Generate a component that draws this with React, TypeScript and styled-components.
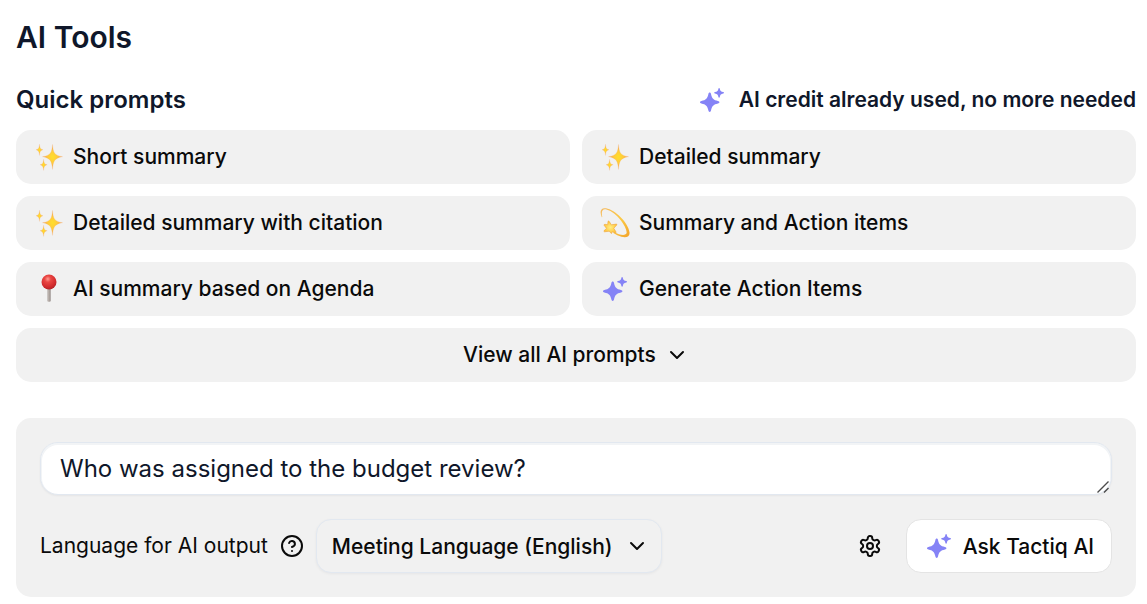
import React from "react";
import styled, { createGlobalStyle } from "styled-components";
import { ChevronDown, CircleQuestionMark } from "lucide-react";

const GlobalStyle = createGlobalStyle`
  *, *::before, *::after { box-sizing: border-box; }
  body {
    margin: 0;
    background: #ffffff;
    color: #0a0a0a;
    font-family: Inter, "Liberation Sans", sans-serif;
  }
  button, select, textarea { font-family: inherit; margin: 0; }
`;

const Page = styled.main`
  display: flex;
  flex-direction: column;
  padding: 16px 11px 7px 16px;
`;

const Title = styled.h1`
  margin: 0;
  font-size: 30px;
  line-height: 42px;
  font-weight: 600;
  color: #0f172a;
`;

const SectionHeader = styled.header`
  display: flex;
  align-items: center;
  justify-content: space-between;
  margin-top: 24px;
  color: #0f172a;
`;

const SectionTitle = styled.h2`
  margin: 0;
  font-size: 24px;
  line-height: 36px;
  font-weight: 600;
`;

const CreditNote = styled.p`
  display: flex;
  align-items: center;
  gap: 12px;
  margin: 0;
  font-size: 21px;
  line-height: 30px;
  font-weight: 600;
`;

const PromptGrid = styled.div`
  display: grid;
  grid-template-columns: 1fr 1fr;
  gap: 12px;
  margin-top: 12px;
`;

const PromptButton = styled.button<{ $wide?: boolean }>`
  display: flex;
  align-items: center;
  justify-content: ${(p) => (p.$wide ? "center" : "flex-start")};
  grid-column: ${(p) => (p.$wide ? "1 / -1" : "auto")};
  gap: 9px;
  height: 54px;
  padding: 0 18px;
  border: 0;
  border-radius: 15px;
  background: #f1f1f1;
  color: #0a0a0a;
  font-size: 21px;
  line-height: 30px;
  font-weight: 500;
  cursor: pointer;
`;

const AskPanel = styled.form`
  display: flex;
  flex-direction: column;
  gap: 24px;
  margin-top: 36px;
  padding: 24px;
  border-radius: 15px;
  background: #f1f1f1;
`;

const QuestionBox = styled.div`
  display: grid;

  > * { grid-area: 1 / 1; }
  > svg {
    align-self: end;
    justify-self: end;
    margin: 0 3px 2px 0;
    pointer-events: none;
  }
`;

const Question = styled.textarea`
  display: block;
  width: 100%;
  height: 53px;
  padding: 8px 19px;
  border: 1px solid #e2e8f0;
  border-radius: 18px;
  background: #ffffff;
  box-shadow: inset 0 1px 0 1px #f2f4f6, 0 1px 2px rgba(15, 23, 42, 0.05);
  color: #0f172a;
  font-size: 24px;
  line-height: 36px;
  resize: vertical;
  overflow: hidden;
  outline: none;

  &::-webkit-resizer { background: transparent; }
`;

const Controls = styled.div`
  display: flex;
  align-items: center;
`;

const LanguageLabel = styled.label`
  font-size: 21px;
  line-height: 30px;
`;

const IconButton = styled.button`
  display: flex;
  padding: 0;
  border: 0;
  background: none;
  color: #0a0a0a;
  cursor: pointer;
`;

const HelpButton = styled(IconButton)`
  margin: 0 12px;
`;

const SettingsButton = styled(IconButton)`
  margin: 0 24px 0 auto;
`;

const SelectBox = styled.div`
  display: grid;
  align-items: center;

  > * { grid-area: 1 / 1; }
  > svg {
    justify-self: end;
    margin-right: 13px;
    pointer-events: none;
  }
`;

const LanguageSelect = styled.select`
  appearance: none;
  height: 54px;
  padding: 0 48px 0 15px;
  border: 1px solid #e2e8f0;
  border-radius: 15px;
  background: #f1f1f1;
  box-shadow: 0 1px 3px rgba(15, 23, 42, 0.05);
  color: #0a0a0a;
  font-size: 21px;
  font-weight: 500;
`;

const AskButton = styled.button`
  display: flex;
  align-items: center;
  gap: 9px;
  height: 54px;
  padding: 0 17px;
  border: 1px solid #e4e4e4;
  border-radius: 15px;
  background: #ffffff;
  color: #0a0a0a;
  font-size: 21px;
  font-weight: 500;
  cursor: pointer;
`;

const Glyph = styled.svg.attrs({ width: 30, height: 30, viewBox: "0 0 30 30", "aria-hidden": true })`
  flex: none;
`;

const AiStars = () => (
  <Glyph fill="#8583f6">
    <path d="M12.7 7.6C13.4 7.6 13.8 8.2 14 9C14.9 13.5 16.5 15.1 21 16C21.8 16.2 22.4 16.7 22.4 17.3S21.8 18.4 21 18.6C16.5 19.5 14.9 21.1 14 25.6C13.8 26.4 13.4 27 12.7 27S11.6 26.4 11.4 25.6C10.5 21.1 8.9 19.5 4.4 18.6C3.6 18.4 3 17.9 3 17.3S3.6 16.2 4.4 16C8.9 15.1 10.5 13.5 11.4 9C11.6 8.2 12 7.6 12.7 7.6Z" />
    <path d="M22.1 3C22.5 3 22.7 3.3 22.8 3.7C23.2 6 24 6.6 26.2 7C26.7 7.1 27 7.4 27 7.8S26.7 8.5 26.2 8.6C24 9 23.2 9.7 22.8 11.9C22.7 12.4 22.5 12.7 22.1 12.7S21.5 12.4 21.4 11.9C21 9.7 20.2 9 18 8.6C17.5 8.5 17.2 8.2 17.2 7.8S17.5 7.1 18 7C20.2 6.6 21 6 21.4 3.7C21.5 3.3 21.7 3 22.1 3Z" />
  </Glyph>
);

const Sparkles = () => (
  <Glyph>
    <defs>
      <radialGradient id="sparkle-fill">
        <stop offset="0" stopColor="#ffdf2a" />
        <stop offset="0.45" stopColor="#ffcb3c" />
        <stop offset="1" stopColor="#f3a462" />
      </radialGradient>
    </defs>
    <g fill="url(#sparkle-fill)" stroke="#f3a762" strokeOpacity="0.45" strokeWidth="0.4">
      <path d="M18.5 2.4C19.2 10.6 20.4 13.4 28.600 14.700C20.4 16.1 19.2 19.1 18.5 27.400C17.8 19.1 16.6 16.1 8.400 14.700C16.6 13.4 17.8 10.6 18.500 2.400Z" />
      <path d="M5.5 2.2C5.8 5.900 6.400 7 9 7.800C6.400 8.600 5.800 9.700 5.500 13.400C5.200 9.700 4.600 8.600 2 7.800C4.600 7 5.200 5.900 5.500 2.200Z" />
      <path d="M9.600 17.200C9.900 20.900 10.500 22 13.200 22.800C10.500 23.600 9.900 24.700 9.600 28.400C9.300 24.700 8.700 23.600 6 22.800C8.700 22 9.300 20.900 9.600 17.200Z" />
    </g>
  </Glyph>
);

const DizzyStar = () => (
  <Glyph>
    <defs>
      <linearGradient id="orbit-fill" x1="0" y1="0" x2="1" y2="1">
        <stop offset="0" stopColor="#f5b95e" />
        <stop offset="0.55" stopColor="#fbc944" />
        <stop offset="1" stopColor="#f2a32a" />
      </linearGradient>
      <radialGradient id="star-fill">
        <stop offset="0" stopColor="#ffee85" />
        <stop offset="1" stopColor="#ffc33a" />
      </radialGradient>
    </defs>
    <path
      fill="url(#orbit-fill)"
      d="M1.800 9.200C-.6 3.800 .4 -.6 6 .3C15 1.700 28.400 14.500 29.500 24.500C30 29.500 24.800 30.800 17.300 27.300L13.400 25L14.200 24C19 26.800 24.600 28.200 26.400 25.600C28.400 21.500 18 4.800 6.500 1.500C1.800 .4 1.200 4.200 2.300 9Z"
    />
    <path
      fill="url(#star-fill)"
      stroke="#efa43c"
      strokeWidth="0.6"
      strokeLinejoin="round"
      d="M8 13.300Q8.700 12.700 9.300 13.500L11.300 16.800L16.300 16.100Q17.300 16.200 16.700 17.100L13.800 20.300L16.200 24.200Q15.900 25.100 14.800 24.700L12.200 23.800L11.400 25.600L9.200 23.200L4.600 23.800Q3.400 23.500 4.100 22.600L6.500 20.400L4 17.200Q3.900 16.300 5 16.300L7.700 16.700Z"
    />
  </Glyph>
);

const Pin = () => (
  <Glyph>
    <defs>
      <radialGradient id="pin-head" cx="0.42" cy="0.3" r="0.7">
        <stop offset="0" stopColor="#ff9a90" />
        <stop offset="0.3" stopColor="#ea4643" />
        <stop offset="0.75" stopColor="#d32c2e" />
        <stop offset="1" stopColor="#b52428" />
      </radialGradient>
      <linearGradient id="pin-needle">
        <stop offset="0" stopColor="#a39a95" />
        <stop offset="0.5" stopColor="#c4bcb7" />
        <stop offset="1" stopColor="#756a65" />
      </linearGradient>
    </defs>
    <rect x="13.500" y="14" width="3" height="13.700" rx="1" fill="url(#pin-needle)" />
    <circle cx="15" cy="8" r="7.500" fill="url(#pin-head)" />
  </Glyph>
);

const Gear = () => (
  <svg width="24" height="24" viewBox="0 0 24 24" fill="none" stroke="currentColor" strokeWidth="2" strokeLinecap="round" strokeLinejoin="round" aria-hidden="true">
    <path d="M12.22 2h-.44a2 2 0 0 0-2 2v.18a2 2 0 0 1-1 1.73l-.43.25a2 2 0 0 1-2 0l-.15-.08a2 2 0 0 0-2.73.73l-.22.38a2 2 0 0 0 .73 2.73l.15.1a2 2 0 0 1 1 1.72v.51a2 2 0 0 1-1 1.74l-.15.09a2 2 0 0 0-.73 2.73l.22.38a2 2 0 0 0 2.73.73l.15-.08a2 2 0 0 1 2 0l.43.25a2 2 0 0 1 1 1.73V20a2 2 0 0 0 2 2h.44a2 2 0 0 0 2-2v-.18a2 2 0 0 1 1-1.73l.43-.25a2 2 0 0 1 2 0l.15.08a2 2 0 0 0 2.73-.73l.22-.39a2 2 0 0 0-.73-2.73l-.15-.08a2 2 0 0 1-1-1.74v-.5a2 2 0 0 1 1-1.74l.15-.09a2 2 0 0 0 .73-2.73l-.22-.38a2 2 0 0 0-2.73-.73l-.15.08a2 2 0 0 1-2 0l-.43-.25a2 2 0 0 1-1-1.73V4a2 2 0 0 0-2-2z" />
    <circle cx="12" cy="12" r="3" />
  </svg>
);

const ResizeGrip = () => (
  <svg width="12" height="12" viewBox="0 0 12 12" fill="none" stroke="#4b4b4b" strokeWidth="1.4" aria-hidden="true">
    <path d="M.5 11.5L11.500 .5M7 11.500L11.500 7" />
  </svg>
);

const prompts = [
  { label: "Short summary", Icon: Sparkles },
  { label: "Detailed summary", Icon: Sparkles },
  { label: "Detailed summary with citation", Icon: Sparkles },
  { label: "Summary and Action items", Icon: DizzyStar },
  { label: "AI summary based on Agenda", Icon: Pin },
  { label: "Generate Action Items", Icon: AiStars },
];

export default function App() {
  return (
    <>
      <GlobalStyle />
      <Page>
        <Title>AI Tools</Title>
        <SectionHeader>
          <SectionTitle>Quick prompts</SectionTitle>
          <CreditNote>
            <AiStars />
            AI credit already used, no more needed
          </CreditNote>
        </SectionHeader>
        <PromptGrid>
          {prompts.map(({ label, Icon }) => (
            <PromptButton key={label} type="button">
              <Icon />
              {label}
            </PromptButton>
          ))}
          <PromptButton type="button" $wide>
            View all AI prompts
            <ChevronDown size={24} aria-hidden="true" />
          </PromptButton>
        </PromptGrid>
        <AskPanel onSubmit={(e) => e.preventDefault()}>
          <QuestionBox>
            <Question aria-label="Question" rows={1} defaultValue="Who was assigned to the budget review?" />
            <ResizeGrip />
          </QuestionBox>
          <Controls>
            <LanguageLabel htmlFor="language">Language for AI output</LanguageLabel>
            <HelpButton type="button" aria-label="About the output language">
              <CircleQuestionMark size={24} />
            </HelpButton>
            <SelectBox>
              <LanguageSelect id="language">
                <option>Meeting Language (English)</option>
              </LanguageSelect>
              <ChevronDown size={24} aria-hidden="true" />
            </SelectBox>
            <SettingsButton type="button" aria-label="Settings">
              <Gear />
            </SettingsButton>
            <AskButton type="submit">
              <AiStars />
              Ask Tactiq AI
            </AskButton>
          </Controls>
        </AskPanel>
      </Page>
    </>
  );
}
